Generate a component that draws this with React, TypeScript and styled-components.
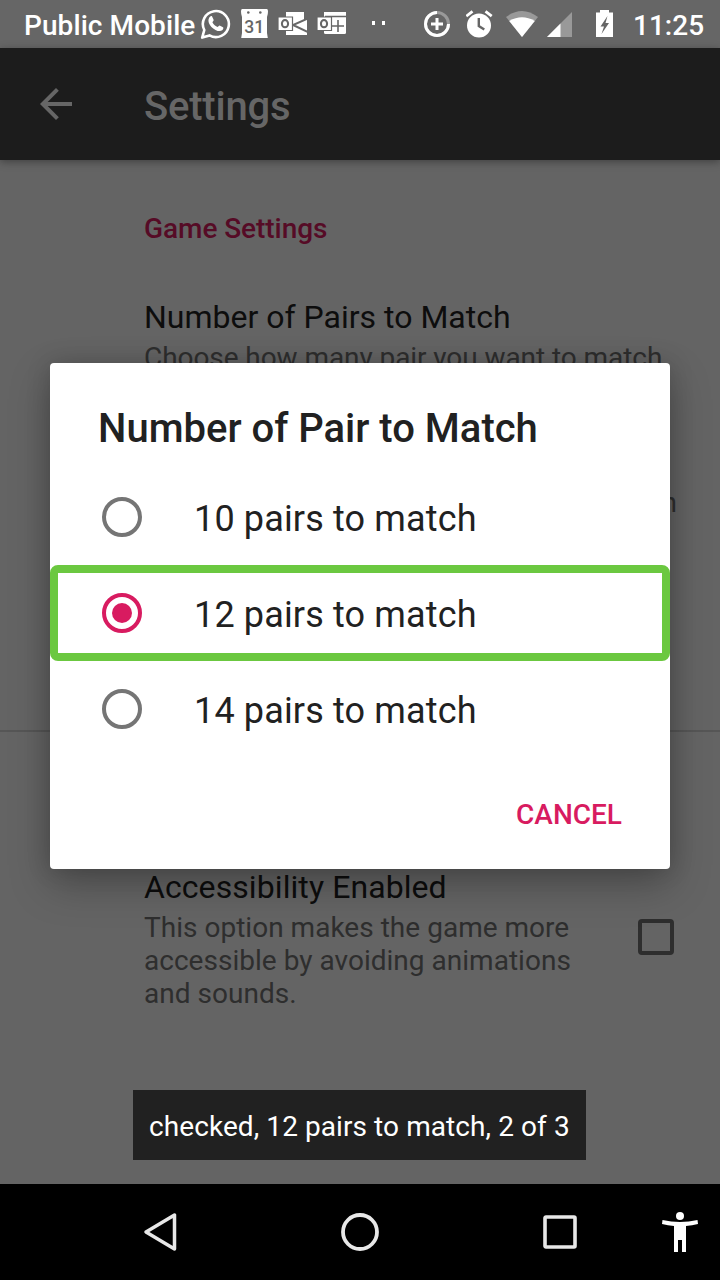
import React from "react";
import styled, { createGlobalStyle } from "styled-components";

const pink = "#d81b60";

const GlobalStyle = createGlobalStyle`
  * { box-sizing: border-box; }
  body { margin: 0; font-family: Roboto, "Noto Sans", sans-serif; background: #000; }
`;

const Screen = styled.div`
  position: relative;
  width: 720px;
  height: 1280px;
  display: flex;
  flex-direction: column;
  overflow: hidden;
`;

const StatusBar = styled.header`
  height: 48px;
  flex: none;
  display: flex;
  align-items: center;
  padding-left: 24px;
  background: #666;
  color: #fff;
  font-size: 28px;
  font-weight: 500;
  white-space: nowrap;
`;

const Carrier = styled.span`
  width: 176px;
  padding-top: 2px;
  letter-spacing: 0.08px;
`;

const Clock = styled.span`
  padding-top: 2px;
  margin-left: 20px;
`;

const Icon = styled.svg<{ $gap?: number }>`
  flex: none;
  display: block;
  margin-left: ${(p) => p.$gap ?? 0}px;
`;

const AppBar = styled.div`
  height: 112px;
  flex: none;
  display: flex;
  align-items: center;
  padding-left: 32px;
  background: #1c1c1c;
  color: #666;
  box-shadow: 0 2px 8px rgba(0, 0, 0, 0.35);
  z-index: 1;
`;

const AppTitle = styled.h1`
  margin: 0 0 0 64px;
  padding-top: 4px;
  font-size: 40px;
  font-weight: 500;
  letter-spacing: -0.2px;
`;

const Content = styled.main`
  flex: 1;
  min-height: 0;
  background: #646464;
  padding-top: 52px;
`;

const Category = styled.h2`
  margin: 0 0 53px 144px;
  font-size: 28px;
  line-height: 33px;
  font-weight: 500;
  letter-spacing: -0.06px;
  color: #560b26;
`;

const Preference = styled.section<{ $height: number }>`
  display: flex;
  height: ${(p) => p.$height}px;
  padding: 0 46px 0 144px;
  justify-content: space-between;
`;

const PreferenceTitle = styled.h3<{ $tracking?: number }>`
  margin: 0 0 5px;
  font-size: 32px;
  line-height: 38px;
  font-weight: 400;
  letter-spacing: ${(p) => p.$tracking ?? 0}px;
  color: #0d0d0d;
`;

const Summary = styled.p<{ $end?: boolean; $tracking?: number }>`
  margin: 0;
  font-size: 28px;
  line-height: 33px;
  letter-spacing: ${(p) => p.$tracking ?? 0}px;
  color: #2e2e2e;
  white-space: pre-line;
  margin-left: ${(p) => (p.$end ? "auto" : "0")};
  margin-right: ${(p) => (p.$end ? "-3px" : "-20px")};
`;

const Divider = styled.hr`
  margin: 0 0 136px;
  border: 0;
  height: 2px;
  background: #565656;
`;

const Checkbox = styled.span`
  width: 36px;
  height: 36px;
  margin-top: 51px;
  border: 4px solid #2e2e2e;
  border-radius: 4px;
`;

const Dialog = styled.div`
  position: absolute;
  z-index: 2;
  top: 363px;
  left: 50px;
  width: 620px;
  height: 506px;
  display: flex;
  flex-direction: column;
  padding-top: 42px;
  border-radius: 4px;
  background: #fff;
  color: #212121;
  box-shadow: 0 16px 40px rgba(0, 0, 0, 0.26), 0 0 24px rgba(0, 0, 0, 0.16);
`;

const DialogTitle = styled.h2`
  margin: 0 48px 16px;
  font-size: 40px;
  line-height: 48px;
  font-weight: 500;
`;

const Option = styled.div<{ $focused?: boolean }>`
  height: 96px;
  display: flex;
  align-items: center;
  gap: 52px;
  padding-left: 44px;
  border: 8px solid ${(p) => (p.$focused ? "#6bc840" : "transparent")};
  border-radius: 8px;
  font-size: 36px;
`;

const OptionLabel = styled.span`
  padding-top: 3px;
  letter-spacing: 0.15px;
`;

const Radio = styled.span<{ $checked?: boolean }>`
  width: 40px;
  height: 40px;
  display: grid;
  place-items: center;
  border: 4px solid ${(p) => (p.$checked ? pink : "#757575")};
  border-radius: 50%;

  &::after {
    content: "";
    width: 20px;
    height: 20px;
    border-radius: 50%;
    background: ${(p) => (p.$checked ? pink : "transparent")};
  }
`;

const CancelButton = styled.button`
  align-self: flex-end;
  margin: 41px 48px 0 0;
  padding: 0;
  border: 0;
  background: none;
  font: 500 28px/33px Roboto, sans-serif;
  color: ${pink};
`;

const Toast = styled.div`
  position: absolute;
  top: 1090px;
  left: 133px;
  width: 453px;
  height: 70px;
  display: flex;
  align-items: center;
  padding: 3px 0 0 16px;
  background: #212121;
  color: #fff;
  font-size: 28px;
  letter-spacing: 0.08px;
  white-space: nowrap;
`;

const NavBar = styled.nav`
  height: 96px;
  flex: none;
  display: grid;
  grid-template-columns: 200px 200px 200px 40px;
  place-items: center;
  padding-left: 60px;
  background: #000;
`;

const options = [
  { label: "10 pairs to match" },
  { label: "12 pairs to match", checked: true },
  { label: "14 pairs to match" },
];

const StatusIcons = () => (
  <>
    {/* chat */}
    <Icon width="32" height="32" viewBox="0 0 32 32">
      <path d="M2.2 29.6 4.3 22A13 13 0 1 1 9.500 27.400Z" fill="none" stroke="#fff" strokeWidth="2.600" strokeLinejoin="round" />
      <path d="M10.200 8.600c.6-.7 1.500-.7 1.900-.1l1.500 3.300c.2.600-.1 1.100-1.200 2.400 1.300 2.400 3 3.900 5.300 4.900.9-.9 1.400-1.700 1.900-1.600l3.400 1.700c.7.400.3 2-.5 2.800-1.800 1.600-4.300 1.400-7-.1-3.200-1.700-5.500-4.200-6.600-7-.9-2.300-.5-4.700 1.300-6.300Z" fill="#fff" />
    </Icon>
    {/* calendar */}
    <Icon $gap={8} width="29" height="30" viewBox="0 0 29 30">
      <path d="M2 0h25q1 0 1 2.500T27 8v16l.8 5H1.200L2 24V8Q1 5 1 2.500T2 0Z" fill="#fff" />
      <circle cx="8.300" cy="3.500" r="1.300" fill="#666" />
      <circle cx="20.300" cy="3.500" r="1.300" fill="#666" />
      <text x="14.200" y="23.500" textAnchor="middle" fontSize="17.500" fontWeight="500" fill="#666">31</text>
    </Icon>
    {/* mail */}
    <Icon $gap={8} width="31" height="24" viewBox="0 0 31 24">
      <path d="M9 0h18v7l3 1v15H9Z" fill="#fff" />
      <path d="M31 6.500 16 13l15 7" fill="none" stroke="#666" strokeWidth="2" />
      <path d="M1 5h14.500v13.500H1Z" fill="#fff" stroke="#666" strokeWidth="1.200" />
      <ellipse cx="8" cy="11.700" rx="3.100" ry="3.600" fill="none" stroke="#666" strokeWidth="2" />
    </Icon>
    {/* mail calendar */}
    <Icon $gap={8} width="31" height="24" viewBox="0 0 31 24">
      <rect x="8" y="-1" width="22" height="23" rx="1.500" fill="#fff" />
      <path d="M9 4.500h21M22 8v12M16 14h12" stroke="#666" strokeWidth="1.600" />
      <path d="M1 5h14.500v13.500H1Z" fill="#fff" stroke="#666" strokeWidth="1.200" />
      <ellipse cx="8" cy="11.700" rx="3.100" ry="3.600" fill="none" stroke="#666" strokeWidth="2" />
    </Icon>
    {/* more notifications */}
    <Icon $gap={25} width="14" height="6" viewBox="0 0 14 6">
      <path d="M0 0h3v4H0zM10 0h3v4h-3z" fill="#fff" />
    </Icon>
    {/* data saver */}
    <Icon $gap={38} width="27" height="28" viewBox="0 0 27 28">
      <circle cx="13" cy="14" r="11.500" fill="none" stroke="#999" strokeWidth="3" />
      <path d="M13 2.500A11.500 11.500 0 1 0 24.500 14" fill="none" stroke="#fff" strokeWidth="3" />
      <path d="M13 8v12M7 14h12" stroke="#fff" strokeWidth="3" />
    </Icon>
    {/* alarm */}
    <Icon $gap={15} width="29" height="28" viewBox="0 0 29 28">
      <circle cx="13" cy="15.500" r="12" fill="#fff" />
      <path d="M.3 6.200 6.500 1.300M25.700 6.200 19.500 1.300" stroke="#fff" strokeWidth="2.800" />
      <path d="M12.800 8v8l5.500 3.400" fill="none" stroke="#666" strokeWidth="2.400" />
    </Icon>
    {/* wifi */}
    <Icon $gap={11} width="32" height="28" viewBox="0 0 32 28">
      <path d="M0 7Q16-5 32 7L16 27Z" fill="#999" />
      <path d="M3.200 11Q16 3.500 28.800 11L16 27Z" fill="#fff" />
    </Icon>
    {/* signal */}
    <Icon $gap={9} width="26" height="28" viewBox="0 0 26 28">
      <path d="M0 27 25 2v25Z" fill="#999" />
      <path d="M0 27 13.500 13.500V27Z" fill="#fff" />
    </Icon>
    {/* battery charging */}
    <Icon $gap={23} width="17" height="28" viewBox="0 0 17 28">
      <path d="M0 2.500h4V0h9v2.500h4V27H0Z" fill="#fff" />
      <path d="M11.500 6 4.500 16.500h3.500L5.500 24 13 13H9.500Z" fill="#666" />
    </Icon>
  </>
);

export default function App() {
  return (
    <Screen>
      <GlobalStyle />
      <StatusBar>
        <Carrier>Public Mobile</Carrier>
        <StatusIcons />
        <Clock>11:25</Clock>
      </StatusBar>
      <AppBar>
        <Icon width="48" height="48" viewBox="0 0 24 24" fill="currentColor">
          <path d="M20 11H7.830l5.590-5.590L12 4l-8 8 8 8 1.410-1.410L7.830 13H20Z" />
        </Icon>
        <AppTitle>Settings</AppTitle>
      </AppBar>
      <Content>
        <Category>Game Settings</Category>
        <Preference $height={188}>
          <div>
            <PreferenceTitle>Number of Pairs to Match</PreferenceTitle>
            <Summary $tracking={-0.07}>Choose how many pair you want to match</Summary>
          </div>
        </Preference>
        <Preference $height={244}>
          <Summary $end>n</Summary>
        </Preference>
        <Divider />
        <Preference $height={142}>
          <div>
            <PreferenceTitle $tracking={0.08}>Accessibility Enabled</PreferenceTitle>
            <Summary $tracking={0.02}>{"This option makes the game more\naccessible by avoiding animations\nand sounds."}</Summary>
          </div>
          <Checkbox />
        </Preference>
      </Content>
      <NavBar>
        <Icon width="40" height="40" viewBox="0 0 40 40">
          <path d="M34.500 3v34L6 20Z" fill="none" stroke="#e8e8e8" strokeWidth="3.500" strokeLinejoin="round" />
        </Icon>
        <Icon width="40" height="40" viewBox="0 0 40 40">
          <circle cx="20" cy="20" r="17" fill="none" stroke="#e8e8e8" strokeWidth="3.800" />
        </Icon>
        <Icon width="40" height="40" viewBox="0 0 40 40">
          <rect x="5" y="5" width="30" height="30" rx="1" fill="none" stroke="#e8e8e8" strokeWidth="3.600" />
        </Icon>
        <Icon width="40" height="40" viewBox="0 0 40 40">
          <circle cx="20" cy="4" r="4" fill="#fff" />
          <path d="M2.500 8Q20 12 37.500 8l.5 4q-6 1.300-12 2v26h-4V28h-4v12h-4V14q-6-.7-12-2Z" fill="#fff" />
        </Icon>
      </NavBar>
      <Dialog role="dialog">
        <DialogTitle>Number of Pair to Match</DialogTitle>
        {options.map((o) => (
          <Option key={o.label} $focused={o.checked}>
            <Radio $checked={o.checked} />
            <OptionLabel>{o.label}</OptionLabel>
          </Option>
        ))}
        <CancelButton>CANCEL</CancelButton>
      </Dialog>
      <Toast>checked, 12 pairs to match, 2 of 3</Toast>
    </Screen>
  );
}
